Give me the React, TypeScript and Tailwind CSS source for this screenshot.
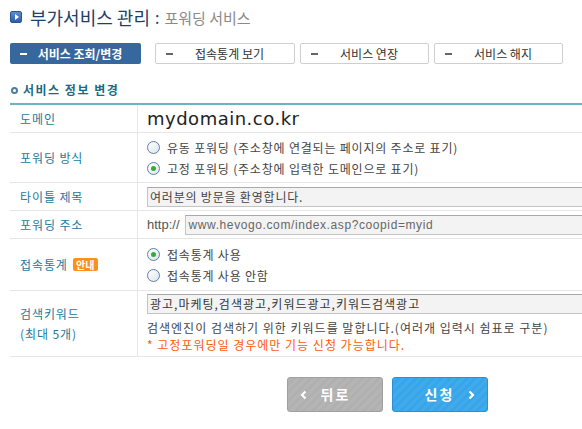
import React from 'react'

const TABS = [
  { label: '서비스 조회/변경', w: 'w-[131px]', active: true },
  { label: '접속통계 보기', w: 'w-[140px]', active: false },
  { label: '서비스 연장', w: 'w-[129px]', active: false },
  { label: '서비스 해지', w: 'w-[129px]', active: false },
]

function Radio({ checked }: { checked?: boolean }) {
  return (
    <span className="w-[13px] h-[13px] rounded-full border border-[#5f7fa6] bg-gradient-to-br from-white to-[#dfe4ea] flex items-center justify-center shrink-0">
      {checked && <span className="w-[5px] h-[5px] rounded-full bg-[#2fb030]" />}
    </span>
  )
}

function Chevron({ dir }: { dir: 'left' | 'right' }) {
  return (
    <svg width="7" height="10" viewBox="0 0 7 10" fill="none" stroke="white" strokeWidth={2.2}>
      <path d={dir === 'left' ? 'M5.5 1.5L2 5l3.5 3.5' : 'M1.5 1.5L5 5 1.5 8.5'} />
    </svg>
  )
}

function Row({ label, h, children }: { label: React.ReactNode; h: string; children: React.ReactNode }) {
  return (
    <div className={`flex border-b border-[#e6e6e6] ${h}`}>
      <div className="w-[128px] shrink-0 border-r border-[#e6e6e6] pl-[10px] flex items-center text-[12px] tracking-[0.9px] text-[#23799c]">
        {label}
      </div>
      <div className="flex-1 pl-[9px] flex flex-col justify-center">{children}</div>
    </div>
  )
}

export default function App() {
  return (
    <div className="w-[582px] h-[429px] overflow-hidden bg-white font-['Noto_Sans_CJK_KR',sans-serif] text-[#444]">
      {/* title */}
      <div className="h-[34px] pl-[10px] flex items-center">
        <span className="w-[12px] h-[12px] rounded-[2px] bg-gradient-to-b from-[#5d8fd0] to-[#2d5fa5] border border-[#2a5592] flex items-center justify-center">
          <span className="w-0 h-0 border-y-[3px] border-y-transparent border-l-[4px] border-l-white ml-[1px]" />
        </span>
        <span className="ml-[8px] text-[18px] leading-none text-[#1f3f66]">부가서비스 관리</span>
        <span className="ml-[5px] text-[16px] leading-none text-[#1f3f66]">:</span>
        <span className="ml-[5px] text-[15px] leading-none text-[#8a8a8a]">포워딩 서비스</span>
      </div>

      {/* tabs */}
      <div className="mt-[9px] pl-[10px] flex">
        {TABS.map((t, i) => (
          <div
            key={t.label}
            className={`${t.w} h-[21px] rounded-[2px] flex items-center text-[12px] ${i === 1 ? 'ml-[14px]' : i > 1 ? 'ml-[5px]' : ''} ${
              t.active ? 'bg-[#36689d] text-white font-bold' : 'border border-[#cfcfcf] text-[#333]'
            }`}
          >
            <span className={`ml-[10px] w-[7px] h-[2px] ${t.active ? 'bg-white' : 'bg-[#666]'}`} />
            <span className="flex-1 text-center pr-[8px]">{t.label}</span>
          </div>
        ))}
      </div>

      {/* section heading */}
      <div className="mt-[16px] h-[20px] pl-[11px] flex items-center">
        <span className="w-[7px] h-[7px] rounded-full border-[2px] border-[#4e7f99]" />
        <span className="ml-[5px] text-[12px] font-bold text-[#1a6a82] tracking-[1.5px]">서비스 정보 변경</span>
      </div>

      {/* table */}
      <div className="mt-[3px] ml-[10px] w-[600px] border-t-2 border-[#6db4c1] text-[12px] tracking-[0.8px]">
        <Row label="도메인" h="h-[28px]">
          <span className="text-[18px] leading-none text-[#222] tracking-[0.5px] font-['DejaVu_Sans',sans-serif]">mydomain.co.kr</span>
        </Row>

        <Row label="포워딩 방식" h="h-[50px]">
          <div className="flex flex-col gap-[6px]">
            <label className="flex items-center gap-[7px] leading-[15px]">
              <Radio />
              <span>유동 포워딩 (주소창에 연결되는 페이지의 주소로 표기)</span>
            </label>
            <label className="flex items-center gap-[7px] leading-[15px]">
              <Radio checked />
              <span>고정 포워딩 (주소창에 입력한 도메인으로 표기)</span>
            </label>
          </div>
        </Row>

        <Row label="타이틀 제목" h="h-[28px]">
          <div className="h-[20px] w-[460px] bg-[#f3f3f3] border border-[#c4c4c4] border-t-[#a9a9a9] flex items-center pl-[2px] leading-none">
            여러분의 방문을 환영합니다.
          </div>
        </Row>

        <Row label="포워딩 주소" h="h-[28px]">
          <div className="flex items-center">
            <span className="font-['Liberation_Sans',sans-serif] text-[13px] tracking-normal text-[#555]">http://</span>
            <div className="ml-[5px] h-[20px] w-[420px] bg-[#f3f3f3] border border-[#c4c4c4] border-t-[#a9a9a9] flex items-center pl-[3px] text-[#666] font-['Liberation_Sans',sans-serif] text-[12px] tracking-[0.6px] leading-none">
              www.hevogo.com/index.asp?coopid=myid
            </div>
          </div>
        </Row>

        <Row
          label={
            <span className="flex items-center">
              접속통계
              <span className="ml-[5px] h-[13px] w-[25px] rounded-[2px] bg-[#f7921e] text-white text-[10px] font-bold leading-[13px] tracking-normal text-center">
                안내
              </span>
            </span>
          }
          h="h-[52px]"
        >
          <div className="flex flex-col gap-[6px]">
            <label className="flex items-center gap-[7px] leading-[15px]">
              <Radio checked />
              <span>접속통계 사용</span>
            </label>
            <label className="flex items-center gap-[7px] leading-[15px]">
              <Radio />
              <span>접속통계 사용 안함</span>
            </label>
          </div>
        </Row>

        <Row
          label={
            <span className="leading-[20px]">
              검색키워드
              <br />
              (최대 5개)
            </span>
          }
          h="h-[66px]"
        >
          <div className="flex flex-col">
            <div className="h-[20px] w-[460px] bg-[#f3f3f3] border border-[#c4c4c4] border-t-[#a9a9a9] flex items-center pl-[2px] leading-none text-[#333] tracking-[1px]">
              광고,마케팅,검색광고,키워드광고,키워드검색광고
            </div>
            <span className="mt-[5px] leading-[17px] text-[#444] tracking-[1px]">
              검색엔진이 검색하기 위한 키워드를 말합니다.(여러개 입력시 쉼표로 구분)
            </span>
            <span className="leading-[17px] text-[#ff5a0a] tracking-[1px]">* 고정포워딩일 경우에만 기능 신청 가능합니다.</span>
          </div>
        </Row>
      </div>

      {/* buttons */}
      <div className="mt-[20px] pl-[287px] flex gap-[9px]">
        <button className="w-[96px] h-[35px] rounded-[3px] border border-[#a0a0a0] bg-[#b0b0b0] bg-[repeating-linear-gradient(135deg,rgba(255,255,255,0.06)_0_3px,transparent_3px_6px)] flex items-center text-white text-[14px] font-bold">
          <span className="ml-[12px] flex"><Chevron dir="left" /></span>
          <span className="flex-1 text-center pr-[18px] tracking-[2px]">뒤로</span>
        </button>
        <button className="w-[96px] h-[35px] rounded-[3px] border border-[#2a8fd8] bg-[#36a5ea] bg-[repeating-linear-gradient(135deg,rgba(255,255,255,0.06)_0_3px,transparent_3px_6px)] flex items-center text-white text-[14px] font-bold">
          <span className="flex-1 text-center pl-[18px] tracking-[2px]">신청</span>
          <span className="mr-[12px] flex"><Chevron dir="right" /></span>
        </button>
      </div>
    </div>
  )
}
